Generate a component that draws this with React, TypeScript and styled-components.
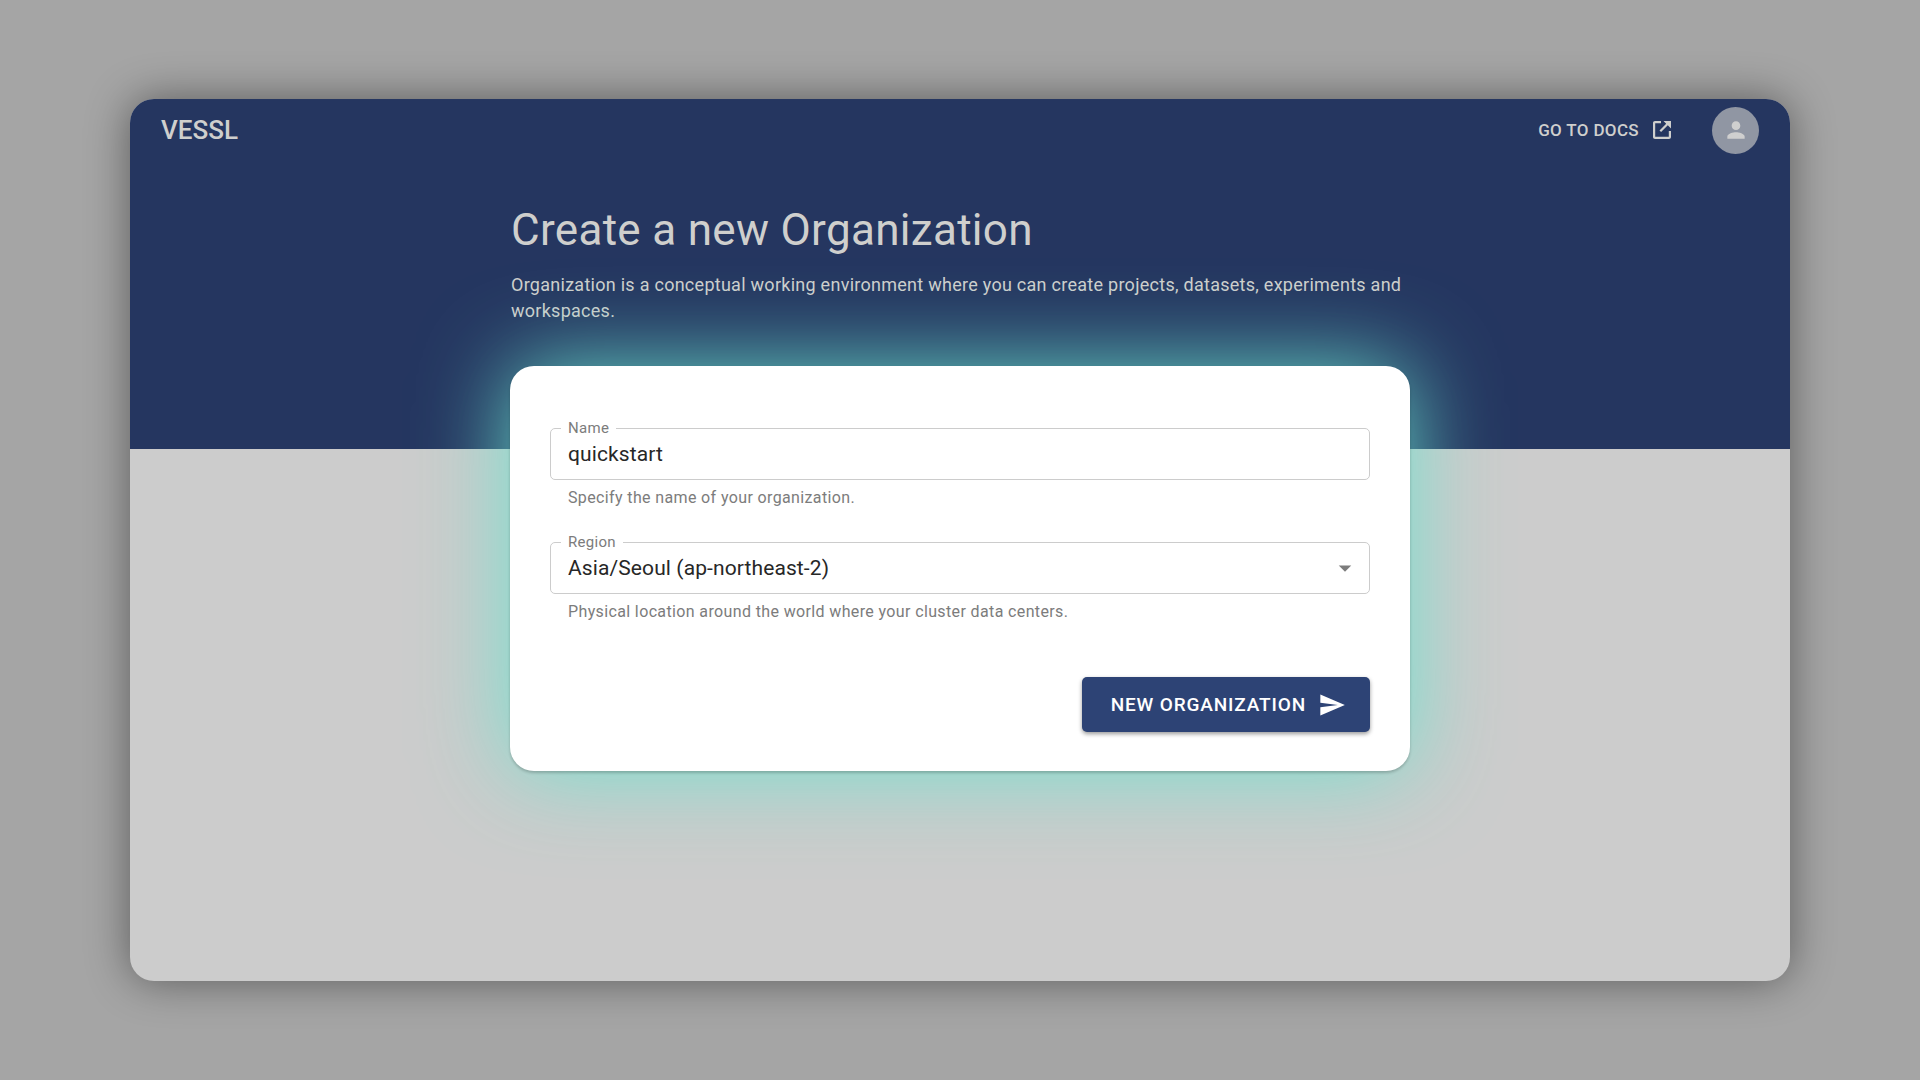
import React from "react";
import styled, { createGlobalStyle } from "styled-components";

const GlobalStyle = createGlobalStyle`
  *, *::before, *::after {
    box-sizing: border-box;
  }
  body {
    margin: 0;
    background: #a5a5a5;
    font-family: Roboto, "Liberation Sans", sans-serif;
    -webkit-font-smoothing: antialiased;
  }
  button, input, select {
    font: inherit;
    letter-spacing: inherit;
  }
`;

const Page = styled.div`
  display: flex;
  min-height: 100vh;
  padding: 99px 130px;
`;

const AppWindow = styled.div`
  flex: 1;
  min-width: 0;
  overflow: hidden;
  border-radius: 24px;
  background: #cccccc;
  box-shadow: 0 0 44px rgba(0, 0, 0, 0.45);
`;

const Hero = styled.div`
  padding-bottom: 125px;
  background: #253660;
  color: #cfcfcd;
`;

const TopBar = styled.header`
  display: flex;
  align-items: center;
  justify-content: space-between;
  height: 62px;
  padding: 0 31px;
`;

const Brand = styled.a`
  color: inherit;
  font-size: 26px;
  font-weight: 500;
  line-height: 32px;
  text-decoration: none;
`;

const Actions = styled.nav`
  display: flex;
  align-items: center;
  gap: 38px;
`;

const DocsLink = styled.a`
  display: flex;
  align-items: center;
  gap: 11px;
  color: inherit;
  font-size: 17px;
  font-weight: 500;
  line-height: 24px;
  letter-spacing: 0.02em;
  text-decoration: none;
`;

const Avatar = styled.button`
  display: grid;
  place-items: center;
  width: 47px;
  height: 47px;
  padding: 0;
  border: 0;
  border-radius: 50%;
  background: #9096a3;
  color: #cfcfcf;
`;

const Icon = styled.svg<{ $size: number }>`
  display: block;
  flex: none;
  width: ${(p) => p.$size}px;
  height: ${(p) => p.$size}px;
  fill: currentColor;
`;

const Column = styled.div`
  width: 100%;
  max-width: 900px;
  margin: 0 auto;
`;

const Title = styled.h1`
  margin: 0;
  padding: 42px 1px 0;
  font-size: 44px;
  font-weight: 400;
  line-height: 54px;
  letter-spacing: 0.007em;
`;

const Lead = styled.p`
  margin: 15px 0 0;
  padding: 0 1px;
  font-size: 18px;
  line-height: 26px;
  letter-spacing: 0.015em;
`;

const Card = styled.form`
  position: relative;
  margin-top: -83px;
  padding: 62px 40px 39px;
  border-radius: 24px;
  background: #fff;
  box-shadow:
    0 2px 3px rgba(0, 0, 0, 0.2),
    0 0 90px rgba(107, 225, 205, 0.95);
`;

const Field = styled.div`
  position: relative;
  margin-bottom: 34px;
`;

const Label = styled.label`
  position: absolute;
  top: -9px;
  left: 11px;
  padding: 0 7px;
  background: #fff;
  color: #7c7c7c;
  font-size: 15px;
  line-height: 18px;
  letter-spacing: 0.02em;
`;

const controlStyles = `
  display: block;
  width: 100%;
  height: 52px;
  margin: 0;
  padding: 0 17px 1px;
  border: 1px solid #cccccc;
  border-radius: 5px;
  background: #fff;
  color: #272727;
  font-size: 21px;
  line-height: 24px;
  letter-spacing: 0.005em;
  outline: none;
`;

const TextBox = styled.input`
  ${controlStyles}
`;

const SelectBox = styled.select`
  ${controlStyles}
  appearance: none;
`;

const Arrow = styled.span`
  position: absolute;
  top: 11px;
  right: 10px;
  color: #7c7c7c;
  pointer-events: none;
`;

const Helper = styled.p`
  margin: 8px 18px 0;
  color: #7c7c7c;
  font-size: 16px;
  line-height: 20px;
  letter-spacing: 0.023em;
`;

const Footer = styled.div`
  display: flex;
  justify-content: flex-end;
  padding-top: 21px;
`;

const SubmitButton = styled.button`
  display: flex;
  align-items: center;
  gap: 12px;
  height: 55px;
  padding: 0 24px 0 29px;
  border: 0;
  border-radius: 5px;
  background: #2d4375;
  color: #fff;
  font-size: 19px;
  font-weight: 500;
  letter-spacing: 0.045em;
  box-shadow: 0 2px 4px rgba(0, 0, 0, 0.4);
`;

export default function App() {
  return (
    <>
      <GlobalStyle />
      <Page>
        <AppWindow>
          <Hero>
            <TopBar>
              <Brand href="#">VESSL</Brand>
              <Actions>
                <DocsLink href="#docs">
                  GO TO DOCS
                  <Icon $size={24} viewBox="0 0 24 24" aria-hidden="true">
                    <path d="M18.8 18.8H5.2V5.2H11V3H5c-1.11 0-2 .9-2 2v14c0 1.1.89 2 2 2h14c1.1 0 2-.9 2-2v-6h-2.200v5.800zM13.500 3l2.700 2.700-6.700 6.700 1.600 1.600 6.700-6.700L21 10.500V3h-7.500z" />
                  </Icon>
                </DocsLink>
                <Avatar type="button" aria-label="Account">
                  <Icon $size={26} viewBox="0 0 24 24" aria-hidden="true">
                    <path d="M12 12c2.21 0 4-1.79 4-4s-1.79-4-4-4-4 1.79-4 4 1.79 4 4 4zm0 2c-2.67 0-8 1.34-8 4v2h16v-2c0-2.66-5.33-4-8-4z" />
                  </Icon>
                </Avatar>
              </Actions>
            </TopBar>
            <Column>
              <Title>Create a new Organization</Title>
              <Lead>
                Organization is a conceptual working environment where you can create projects,
                datasets, experiments and workspaces.
              </Lead>
            </Column>
          </Hero>
          <Column>
            <Card onSubmit={(event) => event.preventDefault()}>
              <Field>
                <Label htmlFor="org-name">Name</Label>
                <TextBox
                  id="org-name"
                  type="text"
                  defaultValue="quickstart"
                  aria-describedby="org-name-help"
                />
                <Helper id="org-name-help">Specify the name of your organization.</Helper>
              </Field>
              <Field>
                <Label htmlFor="org-region">Region</Label>
                <SelectBox
                  id="org-region"
                  defaultValue="ap-northeast-2"
                  aria-describedby="org-region-help"
                >
                  <option value="ap-northeast-2">Asia/Seoul (ap-northeast-2)</option>
                </SelectBox>
                <Arrow>
                  <Icon $size={30} viewBox="0 0 24 24" aria-hidden="true">
                    <path d="M7 10l5 5 5-5z" />
                  </Icon>
                </Arrow>
                <Helper id="org-region-help">
                  Physical location around the world where your cluster data centers.
                </Helper>
              </Field>
              <Footer>
                <SubmitButton type="submit">
                  NEW ORGANIZATION
                  <Icon $size={28} viewBox="0 0 24 24" aria-hidden="true">
                    <path d="M2.01 21L23 12 2.01 3 2 10l15 2-15 2z" />
                  </Icon>
                </SubmitButton>
              </Footer>
            </Card>
          </Column>
        </AppWindow>
      </Page>
    </>
  );
}
